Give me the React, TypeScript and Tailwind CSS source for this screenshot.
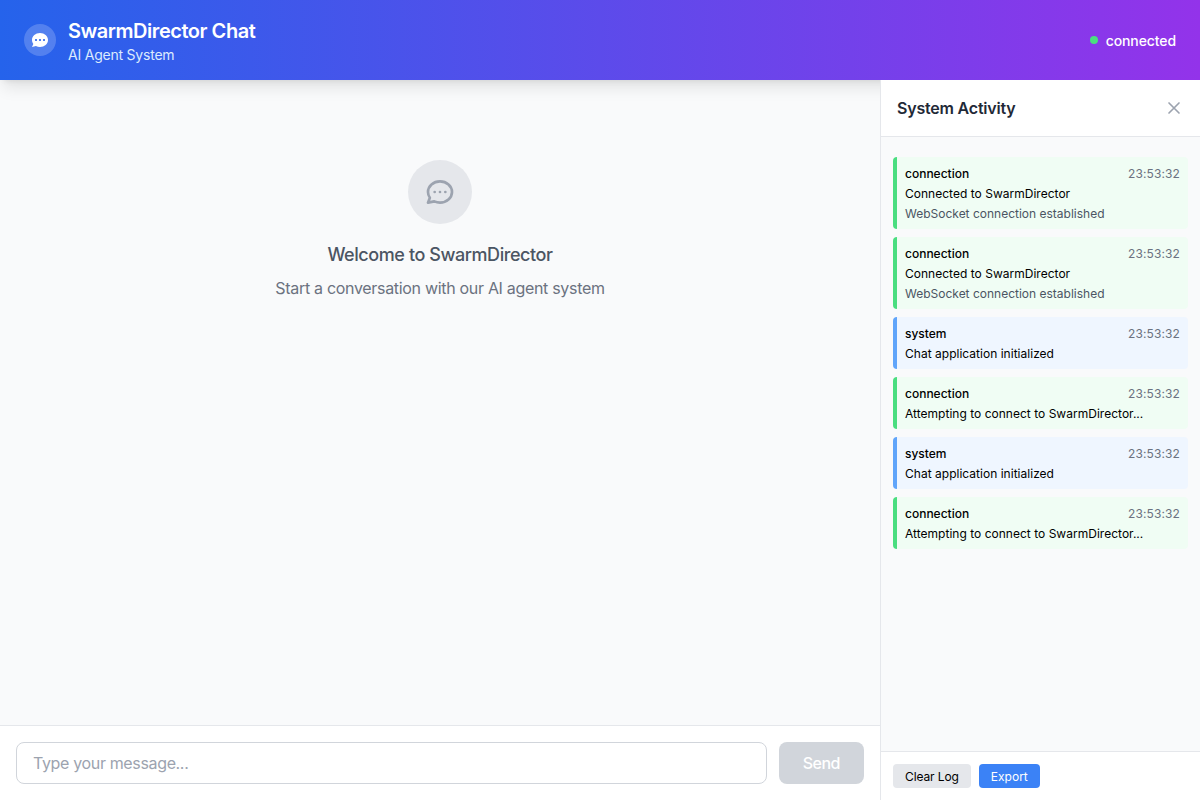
type Entry = { type: 'connection' | 'system'; message: string; details?: string };

const entries: Entry[] = [
  { type: 'connection', message: 'Connected to SwarmDirector', details: 'WebSocket connection established' },
  { type: 'connection', message: 'Connected to SwarmDirector', details: 'WebSocket connection established' },
  { type: 'system', message: 'Chat application initialized' },
  { type: 'connection', message: 'Attempting to connect to SwarmDirector...' },
  { type: 'system', message: 'Chat application initialized' },
  { type: 'connection', message: 'Attempting to connect to SwarmDirector...' },
];

const tones = {
  connection: 'border-[#4ade80] bg-[#f0fdf4]',
  system: 'border-[#60a5fa] bg-[#eff6ff]',
};

function Header() {
  return (
    <header className="relative flex h-20 shrink-0 items-center justify-between bg-linear-to-r/srgb from-[#2563eb] to-[#9333ea] px-6 text-white shadow-[0_10px_15px_-3px_rgba(0,0,0,0.1),0_4px_6px_-4px_rgba(0,0,0,0.1)]">
      <div className="flex items-center gap-3">
        <div className="flex size-8 items-center justify-center rounded-full bg-white/20">
          <svg className="size-5" fill="currentColor" viewBox="0 0 20 20">
            <path
              fillRule="evenodd"
              clipRule="evenodd"
              d="M18 10c0 3.866-3.582 7-8 7a8.841 8.841 0 01-4.083-.98L2 17l1.338-3.123C2.493 12.767 2 11.434 2 10c0-3.866 3.582-7 8-7s8 3.134 8 7zM7 9H5v2h2V9zm8 0h-2v2h2V9zM9 9h2v2H9V9z"
            />
          </svg>
        </div>
        <div className="pt-0.5">
          <h1 className="text-xl font-semibold tracking-[-0.46px]">SwarmDirector Chat</h1>
          <p className="text-sm tracking-[-0.22px] text-[#dbeafe]">AI Agent System</p>
        </div>
      </div>
      <div className="flex items-center gap-2">
        <span className="size-2 rounded-full bg-[#4ade80]" />
        <span className="pt-0.5 text-sm font-medium tracking-[-0.1px]">connected</span>
      </div>
    </header>
  );
}

function Chat() {
  return (
    <main className="flex min-w-0 flex-1 flex-col">
      <div className="flex flex-1 flex-col items-center pt-20">
        <div className="mb-[17px] flex size-16 items-center justify-center rounded-full bg-[#e5e7eb] text-[#9ca3af]">
          <svg className="size-8" fill="none" stroke="currentColor" viewBox="0 0 24 24">
            <path
              strokeLinecap="round"
              strokeLinejoin="round"
              strokeWidth={2}
              d="M8 12h.01M12 12h.01M16 12h.01M21 12c0 4.418-4.03 8-9 8a9.863 9.863 0 01-4.255-.949L3 20l1.395-3.72C3.512 15.042 3 13.574 3 12c0-4.418 4.03-8 9-8s9 3.582 9 8z"
            />
          </svg>
        </div>
        <h2 className="mb-[7px] text-lg font-medium tracking-[-0.42px] text-[#4b5563]">Welcome to SwarmDirector</h2>
        <p className="tracking-[-0.31px] text-[#6b7280]">Start a conversation with our AI agent system</p>
      </div>
      <form className="flex gap-3 border-t border-[#e5e7eb] bg-white p-4" onSubmit={(e) => e.preventDefault()}>
        <input
          className="min-w-0 flex-1 rounded-lg border border-[#d1d5db] px-4 py-2 tracking-[-0.35px] placeholder:text-[#9ca3af]"
          placeholder="Type your message..."
        />
        <button className="rounded-lg bg-[#d1d5db] px-6 py-2 font-medium tracking-[-0.5px] text-white" disabled>
          Send
        </button>
      </form>
    </main>
  );
}

function ActivityPanel() {
  return (
    <aside className="relative flex w-80 shrink-0 flex-col border-l border-[#e5e7eb] bg-[#f9fafb]">
      <div className="flex items-center justify-between border-b border-[#e5e7eb] bg-white p-4">
        <h3 className="font-semibold tracking-[-0.2px] text-[#1f2937]">System Activity</h3>
        <button className="text-[#9ca3af]" aria-label="Close">
          <svg className="size-5" fill="none" stroke="currentColor" viewBox="0 0 24 24">
            <path strokeLinecap="round" strokeLinejoin="round" strokeWidth={2} d="M6 18L18 6M6 6l12 12" />
          </svg>
        </button>
      </div>
      <div className="flex flex-1 flex-col gap-2 px-3 py-5">
        {entries.map((entry, i) => (
          <div key={i} className={`rounded border-l-4 px-2 pt-[9px] pb-[7px] text-xs ${tones[entry.type]}`}>
            <div className="flex justify-between">
              <span className="font-medium">{entry.type}</span>
              <span className="tracking-[0.1px] text-[#6b7280]">23:53:32</span>
            </div>
            <div className="mt-1 tracking-[0.02px]">{entry.message}</div>
            {entry.details && <div className="mt-1 text-[#4b5563]">{entry.details}</div>}
          </div>
        ))}
      </div>
      <div className="flex gap-2 border-t border-[#e5e7eb] bg-white p-3 text-xs">
        <button className="rounded bg-[#e5e7eb] px-3 pt-[5px] pb-[3px] tracking-[-0.1px]">Clear Log</button>
        <button className="rounded bg-[#3b82f6] px-3 pt-[5px] pb-[3px] text-white">Export</button>
      </div>
    </aside>
  );
}

export default function App() {
  return (
    <div className="flex h-screen flex-col overflow-hidden bg-[#f9fafb] font-[Inter,sans-serif] text-black">
      <Header />
      <div className="flex min-h-0 flex-1">
        <Chat />
        <ActivityPanel />
      </div>
    </div>
  );
}
